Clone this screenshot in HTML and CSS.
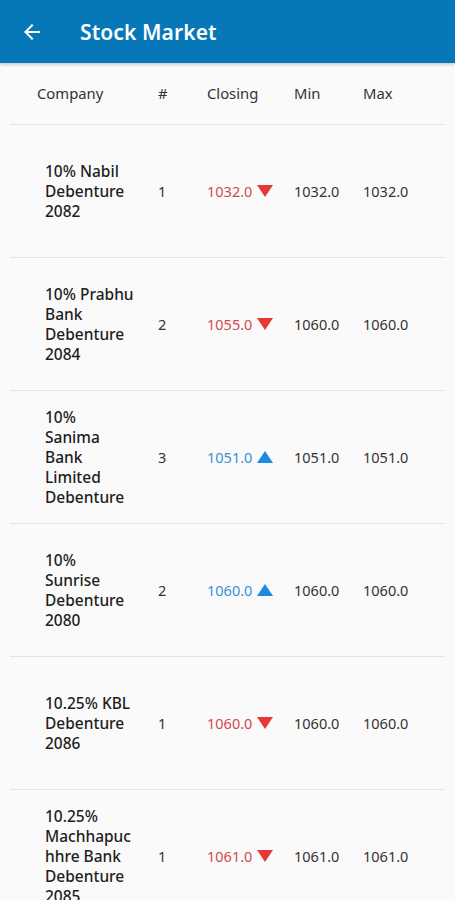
FILE: index.html
```html
<!DOCTYPE html>
<html lang="en">
<head>
<meta charset="utf-8">
<title>Stock Market</title>
<link rel="stylesheet" href="styles.css">
</head>
<body>
<header class="appbar">
  <svg class="back" width="24" height="24" viewBox="0 0 24 24"><path d="M20 11H7.83l5.59-5.59L12 4l-8 8 8 8 1.41-1.41L7.83 13H20v-2z" fill="#fff"/></svg>
  <h1 class="title">Stock Market</h1>
</header>
<main class="table">
  <div class="row head">
    <div class="c1">Company</div><div class="c2">#</div><div class="c3">Closing</div><div class="c4">Min</div><div class="c5">Max</div>
  </div>
  <div class="row">
    <div class="c1 name">10% Nabil<br>Debenture<br>2082</div><div class="c2">1</div>
    <div class="c3 down">1032.0<span class="tri tri-down"></span></div><div class="c4">1032.0</div><div class="c5">1032.0</div>
  </div>
  <div class="row">
    <div class="c1 name">10% Prabhu<br>Bank<br>Debenture<br>2084</div><div class="c2">2</div>
    <div class="c3 down">1055.0<span class="tri tri-down"></span></div><div class="c4">1060.0</div><div class="c5">1060.0</div>
  </div>
  <div class="row">
    <div class="c1 name">10%<br>Sanima<br>Bank<br>Limited<br>Debenture</div><div class="c2">3</div>
    <div class="c3 up">1051.0<span class="tri tri-up"></span></div><div class="c4">1051.0</div><div class="c5">1051.0</div>
  </div>
  <div class="row">
    <div class="c1 name">10%<br>Sunrise<br>Debenture<br>2080</div><div class="c2">2</div>
    <div class="c3 up">1060.0<span class="tri tri-up"></span></div><div class="c4">1060.0</div><div class="c5">1060.0</div>
  </div>
  <div class="row">
    <div class="c1 name">10.25% KBL<br>Debenture<br>2086</div><div class="c2">1</div>
    <div class="c3 down">1060.0<span class="tri tri-down"></span></div><div class="c4">1060.0</div><div class="c5">1060.0</div>
  </div>
  <div class="row">
    <div class="c1 name">10.25%<br>Machhapuc<br>hhre Bank<br>Debenture<br>2085</div><div class="c2">1</div>
    <div class="c3 down">1061.0<span class="tri tri-down"></span></div><div class="c4">1061.0</div><div class="c5">1061.0</div>
  </div>
</main>
</body>
</html>
```
FILE: styles.css
```css
html, body {
  margin: 0;
  padding: 0;
  background: #fafafa;
  font-family: "Noto Sans", "Open Sans", sans-serif;
  color: #222;
}
body { height: 900px; overflow: hidden; }
.appbar {
  height: 63px;
  background: #0677b7;
  display: flex;
  align-items: center;
  padding-left: 20px;
  box-shadow: 0 2px 3px rgba(0,0,0,0.18);
  position: relative;
  z-index: 1;
}
.back { display: block; margin-right: 36px; }
.title {
  margin: 0;
  color: #fff;
  font-size: 21px;
  font-weight: 600;
  letter-spacing: 0.1px;
}
.table { margin: 0 10px; }
.row {
  display: grid;
  grid-template-columns: 121px 49px 87px 69px 1fr;
  align-items: center;
  padding-left: 27px;
  border-bottom: 1px solid #e4e4e4;
  height: 132px;
  font-size: 14.5px;
  color: #333;
}
.row.head {
  height: 59px;
  font-size: 14.8px;
  color: #333;
  padding-bottom: 2px;
}
.head .c1 { padding-left: 0; }
.c1 { padding-left: 8px; }
.name {
  font-size: 15.5px;
  font-weight: 500;
  line-height: 20px;
  color: #1e1e1e;
  white-space: nowrap;
}
.c3 { display: flex; align-items: center; }
.down { color: #d04a50; }
.up { color: #3b8fd2; }
.tri {
  display: inline-block;
  width: 0;
  height: 0;
  margin-left: 5px;
  border-left: 8px solid transparent;
  border-right: 8px solid transparent;
}
.tri-down { border-top: 12px solid #e53935; }
.tri-up { border-bottom: 12px solid #1e88e5; }
```
